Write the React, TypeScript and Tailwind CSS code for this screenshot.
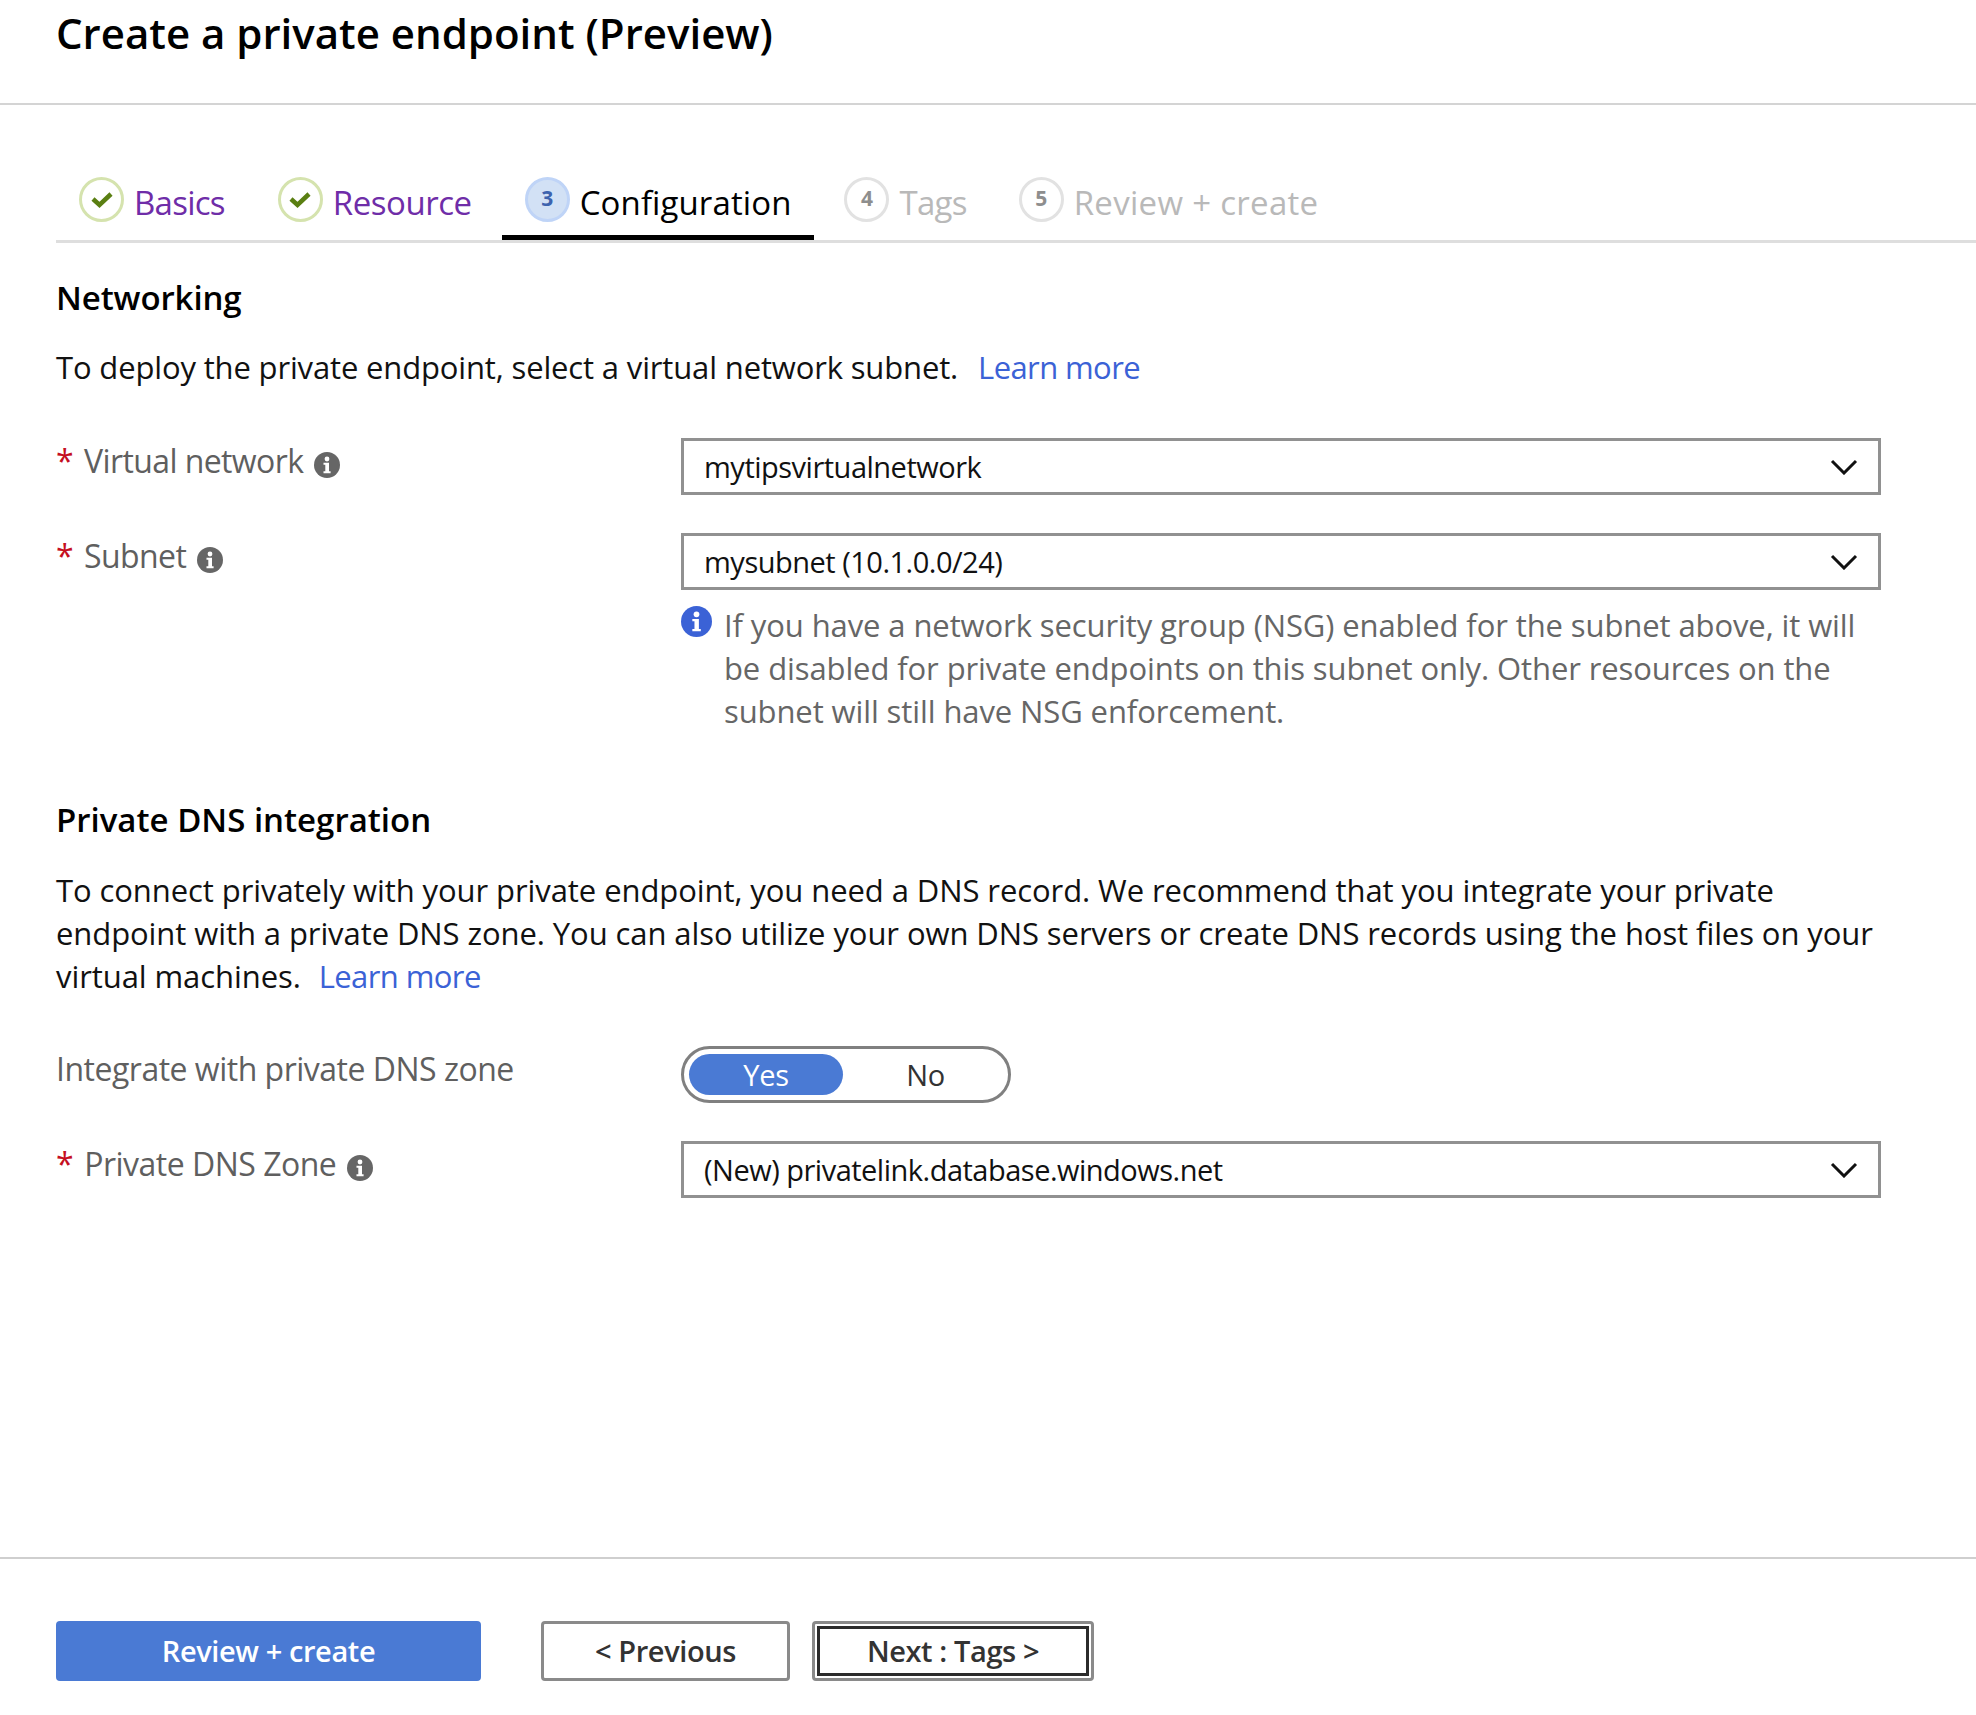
import React from 'react';

const Chevron = () => (
  <svg width="28" height="16" viewBox="0 0 28 16" fill="none" stroke="#111" strokeWidth="3">
    <path d="M2 2 L14 14 L26 2" />
  </svg>
);

const Info = ({ color = '#666', size = 26 }: { color?: string; size?: number }) => (
  <svg width={size} height={size} viewBox="0 0 26 26">
    <circle cx="13" cy="13" r="13" fill={color} />
    <circle cx="13" cy="7" r="2.4" fill="#fff" />
    <path d="M9.5 10.8h5.5v8.4h1.6v2H9.5v-2h1.8v-6.4H9.5z" fill="#fff" />
  </svg>
);

const Check = () => (
  <span className="flex h-[45px] w-[45px] shrink-0 items-center justify-center rounded-full border-[3px] border-[#d5e3ae]">
    <svg width="22" height="18" viewBox="0 0 22 18" fill="none" stroke="#5a7f12" strokeWidth="4.5">
      <path d="M2 8 L8.5 14 L20 3" />
    </svg>
  </span>
);

const Num = ({ n, active }: { n: number; active?: boolean }) => (
  <span
    className={
      active
        ? 'flex h-[45px] w-[45px] shrink-0 items-center justify-center rounded-full border-[3px] border-[#bfd4f7] bg-[#d2e1f5] pb-[2px] text-[21px] font-bold text-[#3d63ae]'
        : 'flex h-[45px] w-[45px] shrink-0 items-center justify-center rounded-full border-[3px] border-[#e2e2e2] pb-[2px] text-[21px] font-bold text-[#8e8e8e]'
    }
  >
    {n}
  </span>
);

const Req = () => <span className="mr-[11px] text-[#c50f1f]">*</span>;

const Select = ({ value }: { value: string }) => (
  <div className="flex h-[57px] w-[1200px] items-center justify-between border-[3px] border-[#919191] px-[20px] text-[29px] tracking-[-0.5px] text-[#111]">
    <span>{value}</span>
    <Chevron />
  </div>
);

export default function App() {
  return (
    <div className="h-[1715px] w-[1976px] overflow-hidden bg-white text-[#111]" style={{ fontFamily: '"Open Sans", "Noto Sans", sans-serif' }}>
      <header className="h-[105px] border-b-2 border-[#d4d4d4] pl-[56px] pt-[4px]">
        <h1 className="text-[42px] font-semibold leading-[58px] text-black">Create a private endpoint (Preview)</h1>
      </header>

      <nav className="ml-[56px] mt-[72px] flex h-[66px] border-b-[3px] border-[#dedede] pl-[23px] text-[33px]">
        <div className="flex h-[63px] gap-[10px] pr-[53px]">
          <Check />
          <span className="mt-[1px] tracking-[-0.75px] text-[#6f2da8]">Basics</span>
        </div>
        <div className="flex h-[63px] gap-[10px] pr-[30px]">
          <Check />
          <span className="mt-[1px] tracking-[-0.45px] text-[#6f2da8]">Resource</span>
        </div>
        <div className="flex h-[63px] gap-[10px] border-b-[5px] border-black pl-[23px] pr-[23px]">
          <Num n={3} active />
          <span className="mt-[1px] tracking-[0.1px] text-black">Configuration</span>
        </div>
        <div className="ml-[30px] flex h-[63px] gap-[10px]">
          <Num n={4} />
          <span className="mt-[1px] tracking-[-0.75px] text-[#b9b9b9]">Tags</span>
        </div>
        <div className="ml-[52px] flex h-[63px] gap-[10px]">
          <Num n={5} />
          <span className="mt-[1px] tracking-[0.3px] text-[#b9b9b9]">Review + create</span>
        </div>
      </nav>

      <main className="pl-[56px]">
        <h2 className="mt-[32px] text-[33px] font-semibold leading-[46px] tracking-[-0.1px] text-black">Networking</h2>
        <p className="mt-[25px] text-[31px] leading-[43px] tracking-[-0.15px]">
          To deploy the private endpoint, select a virtual network subnet.
          <a className="ml-[20px] tracking-[-0.6px] text-[#3b62d6]">Learn more</a>
        </p>

        <div className="mt-[49px] flex">
          <div className="flex h-[57px] w-[625px] items-start text-[32px] leading-[46px] tracking-[-0.6px] text-[#5f5f5f]">
            <Req />Virtual network
            <span className="ml-[11px] mt-[14px]"><Info /></span>
          </div>
          <Select value="mytipsvirtualnetwork" />
        </div>

        <div className="mt-[38px] flex">
          <div className="flex h-[57px] w-[625px] items-start text-[32px] leading-[46px] tracking-[-0.6px] text-[#5f5f5f]">
            <Req />Subnet
            <span className="ml-[11px] mt-[14px]"><Info /></span>
          </div>
          <Select value="mysubnet (10.1.0.0/24)" />
        </div>

        <div className="ml-[625px] mt-[14px] flex w-[1200px] gap-[12px] text-[31px] leading-[43px] tracking-[-0.1px] text-[#666]">
          <span className="mt-[2px] shrink-0"><Info color="#3b62d6" size={31} /></span>
          <p>
            If you have a network security group (NSG) enabled for the subnet above, it will be disabled for private endpoints on this subnet only. Other resources on the subnet will still have NSG enforcement.
          </p>
        </div>

        <h2 className="mt-[64px] text-[33px] font-semibold leading-[46px] tracking-[0px] text-black">Private DNS integration</h2>
        <p className="mt-[26px] w-[1830px] text-[31px] leading-[43px] tracking-[-0.08px]">
          To connect privately with your private endpoint, you need a DNS record. We recommend that you integrate your private endpoint with a private DNS zone. You can also utilize your own DNS servers or create DNS records using the host files on your virtual machines.
          <a className="ml-[18px] tracking-[-0.6px] text-[#3b62d6]">Learn more</a>
        </p>

        <div className="mt-[48px] flex">
          <div className="h-[57px] w-[625px] text-[32px] leading-[46px] tracking-[-0.5px] text-[#5f5f5f]">Integrate with private DNS zone</div>
          <div className="flex h-[57px] w-[330px] items-center rounded-full border-[3px] border-[#808080] pl-[5px] text-[29px] tracking-[-0.3px]">
            <span className="flex h-[41px] w-[154px] items-center justify-center rounded-full bg-[#4a7ad4] text-white">Yes</span>
            <span className="flex w-[165px] justify-center text-[#333]">No</span>
          </div>
        </div>

        <div className="mt-[38px] flex">
          <div className="flex h-[57px] w-[625px] items-start text-[32px] leading-[46px] tracking-[-0.5px] text-[#5f5f5f]">
            <Req />Private DNS Zone
            <span className="ml-[11px] mt-[14px]"><Info /></span>
          </div>
          <Select value="(New) privatelink.database.windows.net" />
        </div>
      </main>

      <footer className="mt-[359px] flex h-[158px] gap-[22px] border-t-2 border-[#cfcfcf] pl-[56px] pt-[62px] text-[29px] font-semibold tracking-[-0.4px]">
        <button className="mr-[38px] h-[60px] w-[425px] rounded-[4px] bg-[#4a7ad4] text-white">Review + create</button>
        <button className="h-[60px] w-[249px] rounded-[4px] border-[3px] border-[#8a8a8a] text-[#333]">&lt; Previous</button>
        <button className="h-[60px] w-[282px] rounded-[4px] border-[3px] border-[#8a8a8a] p-[2px] text-[#333]">
          <span className="flex h-full w-full items-center justify-center border-[3px] border-[#2b2b2b]">Next : Tags &gt;</span>
        </button>
      </footer>
    </div>
  );
}
